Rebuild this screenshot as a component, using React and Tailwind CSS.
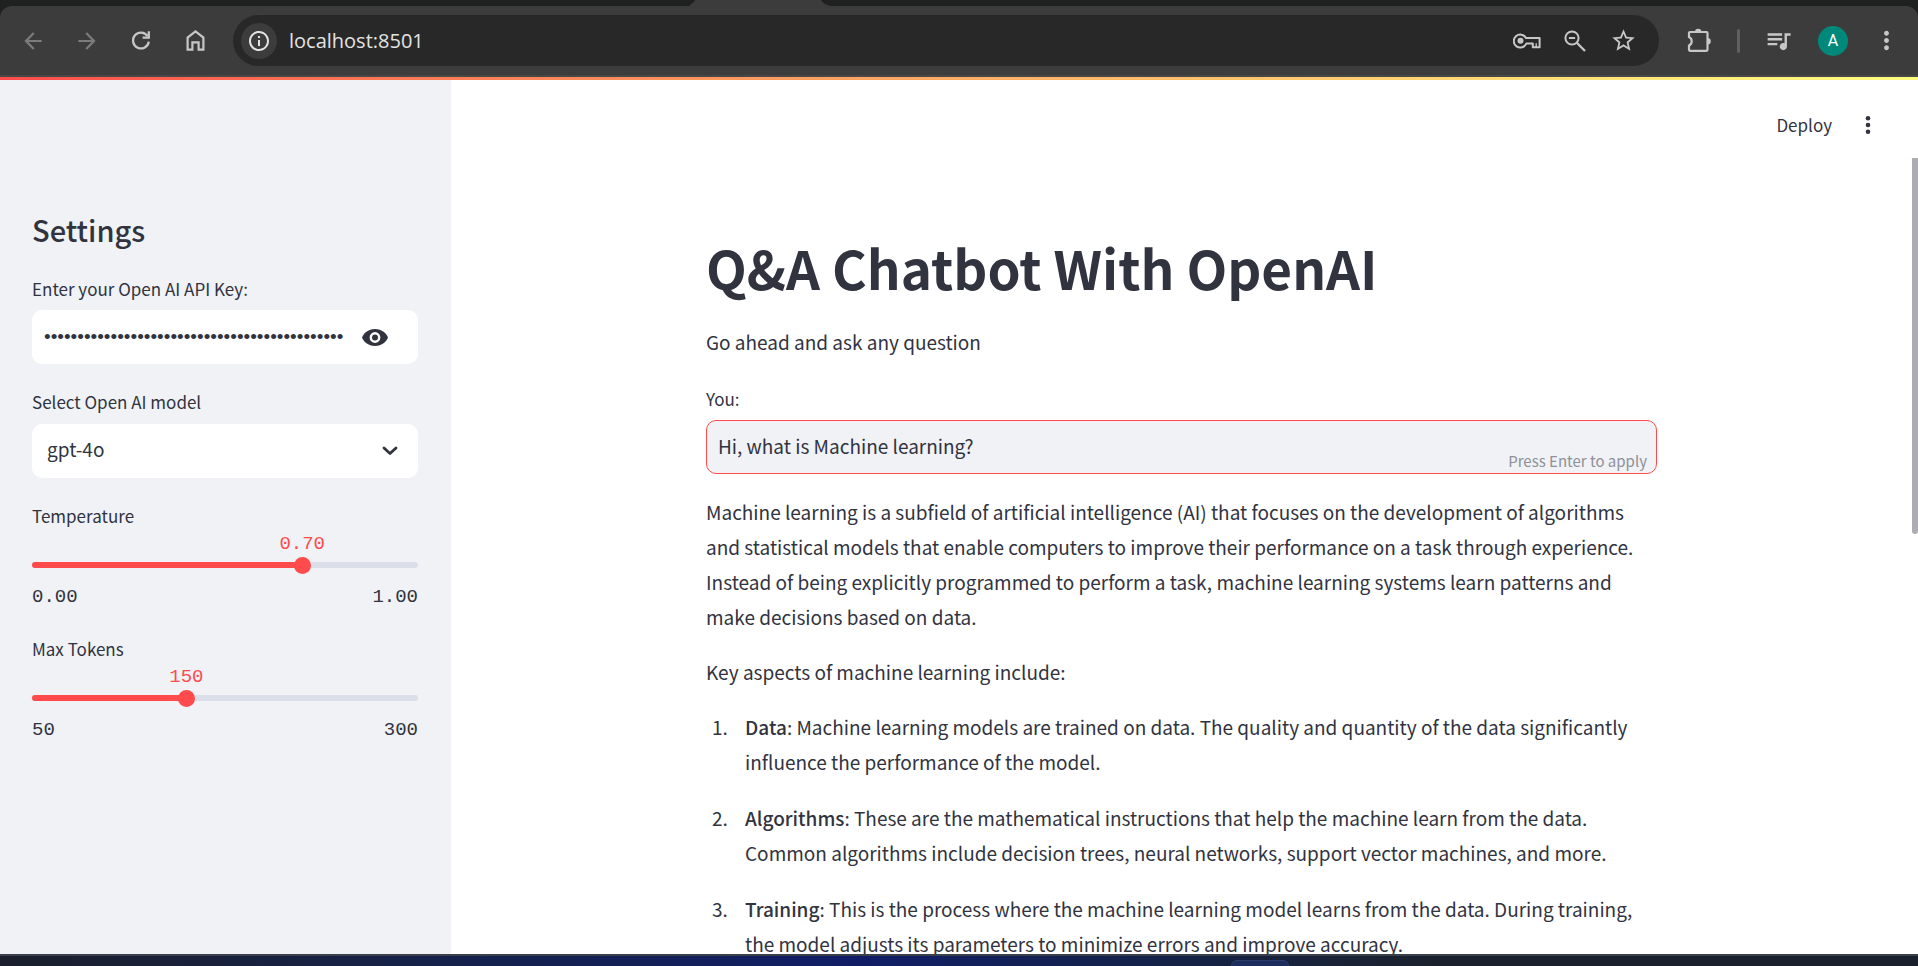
import React, { useState } from "react";
import { MdArrowBack, MdArrowForward, MdInfoOutline, MdStarBorder, MdQueueMusic, MdMoreVert } from "react-icons/md";

const sans = "font-['Noto_Sans_CJK_SC',sans-serif]";

function ToolButton({ label, children, className = "text-[#c7c7c7]" }) {
  return (
    <button type="button" aria-label={label} className={`flex size-8 shrink-0 items-center justify-center ${className}`}>
      {children}
    </button>
  );
}

function ReloadIcon() {
  return (
    <svg width="18" height="19" viewBox="0 0 18 19" fill="none" stroke="currentColor" strokeWidth="2.300">
      <path d="M16.800 10.600A7.900 7.900 0 1 1 15.600 5.200" />
      <path d="M16.800 0.300V6.700H10.600" />
    </svg>
  );
}

function HomeIcon() {
  return (
    <svg width="19" height="21" viewBox="0 0 19 21" fill="none" stroke="currentColor" strokeWidth="2.200">
      <path d="M1.600 19.700V7.600L9.500 1.500L17.400 7.600V19.700H12.600V12.300H6.400V19.700Z" />
    </svg>
  );
}

function KeyIcon() {
  return (
    <svg width="28" height="16" viewBox="0 0 28 16" fill="none" stroke="currentColor" strokeWidth="2">
      <path d="M13 5H26.600V14.200H19.800V10.500H13.300A6.500 6.500 0 1 1 13 5Z" strokeLinejoin="round" />
      <path d="M23.200 10.200V14" strokeWidth="1.400" />
      <circle cx="7.500" cy="7.800" r="3" fill="currentColor" stroke="none" />
    </svg>
  );
}

function ZoomOutIcon() {
  return (
    <svg width="22" height="22" viewBox="0 0 22 22" fill="none" stroke="currentColor" strokeWidth="2">
      <circle cx="8" cy="8" r="6.600" />
      <path d="M4.900 8H11.100" />
      <path d="M12.800 12.800L21 21" strokeWidth="2.300" />
    </svg>
  );
}

function ExtensionIcon() {
  return (
    <svg width="25" height="25" viewBox="0 0 25 25" fill="none">
      <path d="M2 9V5Q2 4 3 4H19.500Q20.500 4 20.500 5V21.800Q20.500 22.800 19.500 22.800H3Q2 22.800 2 21.800V17.600C5.600 16 5.600 10.600 2 9Z" stroke="currentColor" strokeWidth="2.200" />
      <path d="M8 4A3.200 3.200 0 0 1 14.400 4ZM20.500 10A3.300 3.300 0 0 1 20.500 16.600Z" fill="currentColor" />
    </svg>
  );
}

function BrowserBar() {
  return (
    <header className="shrink-0 bg-[#1f2120]">
      <div className="relative h-[6px] overflow-hidden">
        <svg aria-hidden="true" className="absolute left-[36%] h-[6px] w-[140px]" viewBox="0 0 140 6">
          <path d="M-6 6C0 6 4 3 5 0H131C133 3 137 6 142 6Z" fill="#3c3c3c" />
        </svg>
      </div>
      <div className="flex h-[71px] items-center rounded-t-xl border-b-2 border-[#474747] bg-[#3c3c3c] pr-4 pl-[17px]">
        <nav className="flex gap-[22px]" aria-label="Browser">
          <ToolButton label="Back" className="text-[#7b7b7b]"><MdArrowBack size={26} /></ToolButton>
          <ToolButton label="Forward" className="text-[#7b7b7b]"><MdArrowForward size={26} /></ToolButton>
          <ToolButton label="Reload"><ReloadIcon /></ToolButton>
          <ToolButton label="Home"><HomeIcon /></ToolButton>
        </nav>
        <div className="ml-[22px] flex h-[51px] flex-1 items-center rounded-full bg-[#282828] pr-5 pl-2">
          <button type="button" aria-label="Site information" className="flex size-9 items-center justify-center rounded-full bg-[#3c3c3c] text-[#e3e3e3]">
            <MdInfoOutline size={24} />
          </button>
          <input aria-label="Address" defaultValue="localhost:8501" className="ml-3 min-w-0 flex-1 bg-transparent font-['Open_Sans',sans-serif] text-xl text-[#e3e3e3] outline-none" />
          <div className="flex gap-4">
            <ToolButton label="Passwords"><KeyIcon /></ToolButton>
            <ToolButton label="Zoom"><ZoomOutIcon /></ToolButton>
            <ToolButton label="Bookmark"><MdStarBorder size={27} /></ToolButton>
          </div>
        </div>
        <div className="ml-6 flex items-center gap-[22px]">
          <ToolButton label="Extensions"><ExtensionIcon /></ToolButton>
          <div className="h-6 w-[3px] rounded-full bg-[#606060]" />
          <div className="flex items-center gap-6">
            <ToolButton label="Media"><MdQueueMusic size={29} /></ToolButton>
            <button type="button" aria-label="Profile" className="size-[30px] rounded-full bg-[#00897b] font-[Roboto,sans-serif] text-base text-white">A</button>
          </div>
          <ToolButton label="Menu"><MdMoreVert size={29} /></ToolButton>
        </div>
      </div>
    </header>
  );
}

function Slider({ id, label, min, max, step, initial, digits }) {
  const [value, setValue] = useState(initial);
  const share = `${((value - min) / (max - min)) * 100}%`;
  return (
    <div>
      <label htmlFor={id} className="block text-[17px] leading-7">{label}</label>
      <div className="flex h-[25px] text-[19px] leading-7 text-[#ff4b4b]">
        <div style={{ width: share }} className="relative font-['Liberation_Mono',monospace]">
          <output htmlFor={id} className="absolute right-0 translate-x-1/2">{value.toFixed(digits)}</output>
        </div>
      </div>
      <div className="grid h-5 items-center">
        <div className="h-[6px] overflow-hidden rounded-full bg-[#dadfe9] [grid-area:1/1]">
          <div style={{ width: share }} className="h-full bg-[#ff4b4b]" />
        </div>
        <input
          id={id} type="range" min={min} max={max} step={step} value={value}
          onChange={(e) => setValue(Number(e.target.value))}
          className="-mx-2 h-5 w-[calc(100%+16px)] appearance-none bg-transparent [grid-area:1/1] [&::-webkit-slider-thumb]:size-[17px] [&::-webkit-slider-thumb]:appearance-none [&::-webkit-slider-thumb]:rounded-full [&::-webkit-slider-thumb]:bg-[#ff4b4b]"
        />
      </div>
      <div className="mt-2 flex justify-between font-['Liberation_Mono',monospace] text-[19px] leading-7">
        <span>{min.toFixed(digits)}</span>
        <span>{max.toFixed(digits)}</span>
      </div>
    </div>
  );
}

function Sidebar() {
  return (
    <aside className="w-[451px] shrink-0 bg-[#f0f2f6] pt-[129px] pr-[33px] pl-8">
      <h2 className="text-[29px] leading-10 font-medium">Settings</h2>
      <label htmlFor="api-key" className="mt-[26px] block text-[17px] leading-7">Enter your Open AI API Key:</label>
      <div className="mt-[7px] flex h-[54px] items-center rounded-[10px] bg-white pr-[30px] pl-3">
        <input id="api-key" type="password" defaultValue={"k".repeat(45)} className="min-w-0 flex-1 bg-transparent font-['Liberation_Sans',sans-serif] text-[19px] outline-none" />
        <button type="button" aria-label="Show password text" className="ml-4">
          <svg width="26" height="17" viewBox="0 0 26 17" fill="none">
            <path d="M13 0C6 0 1.500 4.500 0 8.500C1.500 12.500 6 17 13 17S24.500 12.500 26 8.500C24.500 4.500 20 0 13 0Z" fill="currentColor" />
            <circle cx="13" cy="8.500" r="4.200" stroke="white" strokeWidth="2.400" />
          </svg>
        </button>
      </div>
      <label htmlFor="model" className="mt-6 block text-[17px] leading-7">Select Open AI model</label>
      <div className="mt-2 grid items-center">
        <select id="model" defaultValue="gpt-4o" className="h-[54px] w-full appearance-none rounded-[10px] bg-white px-[15px] pb-[3px] text-[19px] outline-none [grid-area:1/1]">
          <option>gpt-4o</option>
          <option>gpt-4-turbo</option>
          <option>gpt-4</option>
        </select>
        <svg className="pointer-events-none mr-5 justify-self-end [grid-area:1/1]" width="16" height="10" viewBox="0 0 16 10" fill="none">
          <path d="M2 2L8 7.500L14 2" stroke="currentColor" strokeWidth="2.800" strokeLinecap="round" strokeLinejoin="round" />
        </svg>
      </div>
      <div className="mt-6 flex flex-col gap-6">
        <Slider id="temperature" label="Temperature" min={0} max={1} step={0.01} initial={0.7} digits={2} />
        <Slider id="max-tokens" label="Max Tokens" min={50} max={300} step={1} initial={150} digits={0} />
      </div>
    </aside>
  );
}

const aspects = [
  ["Data", "Machine learning models are trained on data. The quality and quantity of the data significantly influence the performance of the model."],
  ["Algorithms", "These are the mathematical instructions that help the machine learn from the data. Common algorithms include decision trees, neural networks, support vector machines, and more."],
  ["Training", "This is the process where the machine learning model learns from the data. During training, the model adjusts its parameters to minimize errors and improve accuracy."],
];

function Answer() {
  return (
    <div className="mt-5 flex flex-col gap-5 text-[19px] leading-[35px]">
      <p>
        Machine learning is a subfield of artificial intelligence (AI) that focuses on the development of algorithms and
        statistical models that enable computers to improve their performance on a task through experience. Instead of
        being explicitly programmed to perform a task, machine learning systems learn patterns and make decisions based
        on data.
      </p>
      <p>Key aspects of machine learning include:</p>
      <ol className="flex list-decimal flex-col gap-[21px] pl-[26px]">
        {aspects.map(([name, text]) => (
          <li key={name} className="pl-[13px]"><strong className="font-medium">{name}</strong>: {text}</li>
        ))}
      </ol>
    </div>
  );
}

export default function App() {
  return (
    <div className={`flex h-screen flex-col overflow-hidden bg-white text-[#31333f] ${sans}`}>
      <BrowserBar />
      <div className="h-[3px] shrink-0 bg-linear-to-r from-[#ff4b4b] to-[#fffd80]" />
      <div className="flex min-h-0 flex-1 overflow-hidden">
        <Sidebar />
        <div className="flex min-w-0 flex-1 flex-col">
          <div className="flex h-[78px] shrink-0 items-center justify-end gap-5 pt-3 pr-[34px]">
            <button type="button" className="text-[17px]">Deploy</button>
            <button type="button" aria-label="Main menu" className="flex size-8 items-center justify-center">
              <svg width="6" height="18" viewBox="0 0 6 18" fill="currentColor">
                <circle cx="3" cy="2.300" r="2.300" /><circle cx="3" cy="9" r="2.300" /><circle cx="3" cy="15.700" r="2.300" />
              </svg>
            </button>
          </div>
          <div className="flex min-h-0 flex-1 overflow-hidden">
            <main className="min-w-0 flex-1">
              <div className="mx-auto max-w-[951px] pt-[73px]">
                <h1 className="text-[53px] leading-[72px] font-bold">Q&amp;A Chatbot With OpenAI</h1>
                <p className="mt-[21px] text-[19px] leading-[35px]">Go ahead and ask any question</p>
                <label htmlFor="question" className="mt-[26px] block text-[17px] leading-7">You:</label>
                <div className="relative mt-[7px]">
                  <input id="question" defaultValue="Hi, what is Machine learning?" className="h-[54px] w-full rounded-[10px] border border-[#ff4b4b] bg-[#f0f2f6] px-[11px] pb-[3px] text-[19px] outline-none" />
                  <span className="absolute right-[10px] bottom-[3px] text-[15px] leading-5 text-[#8f9098]">Press Enter to apply</span>
                </div>
                <Answer />
              </div>
            </main>
            <div className="h-[376px] w-[6px] shrink-0 rounded-b-sm bg-[#acacb2]" />
          </div>
        </div>
      </div>
      <footer className="h-3 shrink-0 overflow-hidden border-t-2 border-[#3c404c] bg-linear-to-r from-[#1b1f2c] via-[#101d66] via-45% to-[#1b212c] to-75%">
        <div className="mt-1 ml-[64.200%] h-6 w-[58px] rounded-md border border-[#2d3c68] bg-[#1c2c5c]" />
      </footer>
    </div>
  );
}
